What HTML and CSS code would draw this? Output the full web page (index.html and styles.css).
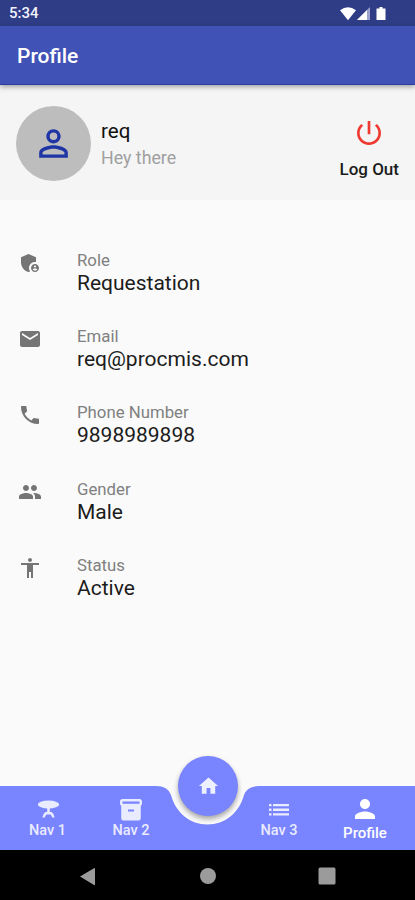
FILE: index.html
```html
<!DOCTYPE html>
<html lang="en">
<head>
  <meta charset="UTF-8">
  <meta name="viewport" content="width=device-width, initial-scale=1.0">
  <title>Profile</title>
  <link rel="stylesheet" href="styles.css">
</head>
<body>
  <div class="status-bar">
    <span class="time">5:34</span>
    <svg class="status-icons" width="50" height="16" viewBox="0 0 50 16">
      <path d="M0 4.2Q8 -1.8 16 4.2L8 14.2Z" fill="#fff"/>
      <path d="M17 14L30 1V14Z" fill="#9aa2d0"/>
      <path d="M17 14L27 4V14Z" fill="#fff"/>
      <path d="M39.500 1h3v1.500h3V14h-9V2.500h3Z" fill="#fff"/>
    </svg>
  </div>

  <header class="app-bar">
    <h1>Profile</h1>
  </header>

  <section class="user-card">
    <div class="avatar">
      <svg width="43" height="43" viewBox="0 0 24 24">
        <path d="M12 5.900a2.100 2.100 0 1 1 0 4.200 2.100 2.100 0 0 1 0-4.200m0 9c2.970 0 6.100 1.460 6.100 2.100v1.100H5.900V17c0-.64 3.130-2.100 6.100-2.100M12 4C9.790 4 8 5.790 8 8s1.790 4 4 4 4-1.790 4-4-1.790-4-4-4zm0 9c-2.670 0-8 1.340-8 4v3h16v-3c0-2.660-5.330-4-8-4z"/>
      </svg>
    </div>
    <div class="user-text">
      <div class="user-name">req</div>
      <div class="user-bio">Hey there</div>
    </div>
    <div class="logout">
      <svg width="32" height="32" viewBox="0 0 24 24">
        <path d="M13 3h-2v10h2V3zm4.830 2.170l-1.420 1.420A6.920 6.920 0 0 1 19 12c0 3.870-3.130 7-7 7s-7-3.130-7-7c0-2.190 1.010-4.140 2.580-5.420L6.170 5.170A8.930 8.930 0 0 0 3 12c0 4.970 4.030 9 9 9s9-4.030 9-9c0-2.740-1.230-5.180-3.170-6.830z"/>
      </svg>
      <span>Log Out</span>
    </div>
  </section>

  <main class="details">
    <div class="row">
      <svg viewBox="0 0 24 24">
        <path d="M17 11c.34 0 .67.040 1 .090V6.270L10.500 3 3 6.270v4.910c0 4.540 3.200 8.790 7.500 9.820.55-.13 1.080-.32 1.600-.55A5.970 5.970 0 0 1 11 17c0-3.310 2.690-6 6-6z"/>
        <path d="M17 13c-2.210 0-4 1.790-4 4s1.790 4 4 4 4-1.790 4-4-1.790-4-4-4zm0 1.380a1.120 1.120 0 1 1 0 2.240 1.120 1.120 0 0 1 0-2.240zm0 5.370c-.93 0-1.740-.46-2.240-1.170.050-.72 1.510-1.080 2.240-1.080s2.190.36 2.240 1.080c-.5.710-1.310 1.170-2.240 1.170z"/>
      </svg>
      <div>
        <div class="label">Role</div>
        <div class="value">Requestation</div>
      </div>
    </div>
    <div class="row">
      <svg viewBox="0 0 24 24">
        <path d="M20 4H4c-1.100 0-1.990.9-1.990 2L2 18c0 1.100.9 2 2 2h16c1.100 0 2-.9 2-2V6c0-1.100-.9-2-2-2zm0 4l-8 5-8-5V6l8 5 8-5v2z"/>
      </svg>
      <div>
        <div class="label">Email</div>
        <div class="value">req@procmis.com</div>
      </div>
    </div>
    <div class="row">
      <svg viewBox="0 0 24 24">
        <path d="M6.620 10.790c1.440 2.830 3.760 5.140 6.590 6.590l2.200-2.200c.27-.27.67-.36 1.020-.24 1.120.37 2.330.57 3.570.57.55 0 1 .45 1 1V20c0 .55-.45 1-1 1-9.390 0-17-7.610-17-17 0-.55.45-1 1-1h3.500c.55 0 1 .45 1 1 0 1.250.2 2.450.57 3.570.11.35.030.74-.25 1.020l-2.200 2.200z"/>
      </svg>
      <div>
        <div class="label">Phone Number</div>
        <div class="value">9898989898</div>
      </div>
    </div>
    <div class="row">
      <svg viewBox="0 0 24 24">
        <path d="M16 11c1.660 0 2.990-1.340 2.990-3S17.660 5 16 5s-3 1.340-3 3 1.340 3 3 3zm-8 0c1.660 0 2.990-1.340 2.990-3S9.660 5 8 5 5 6.340 5 8s1.340 3 3 3zm0 2c-2.330 0-7 1.170-7 3.500V19h14v-2.500c0-2.330-4.670-3.500-7-3.500zm8 0c-.29 0-.62.020-.97.050 1.160.84 1.970 1.970 1.970 3.450V19h6v-2.500c0-2.330-4.670-3.500-7-3.500z"/>
      </svg>
      <div>
        <div class="label">Gender</div>
        <div class="value">Male</div>
      </div>
    </div>
    <div class="row">
      <svg viewBox="0 0 24 24">
        <path d="M12 2c1.100 0 2 .9 2 2s-.9 2-2 2-2-.9-2-2 .9-2 2-2zm9 7h-6v13h-2v-6h-2v6H9V9H3V7h18v2z"/>
      </svg>
      <div>
        <div class="label">Status</div>
        <div class="value">Active</div>
      </div>
    </div>
  </main>

  <nav class="bottom-nav">
    <svg class="nav-shape" width="415" height="64" viewBox="0 0 415 64">
      <path d="M0 0H156Q168 0 171 9C176 27 190 38.500 207.500 38.500S239 27 244 9Q247 0 259 0H415V64H0Z"/>
    </svg>
    <a class="nav-item nav-1">
      <svg width="24" height="24" viewBox="0 0 24 24">
        <ellipse cx="12.500" cy="6.500" rx="10.700" ry="4"/>
        <path d="M11.200 10h2.600v4h1.900q2.500 2 3 5.500h-2.400L14.700 16.500h-4.400L8.700 19.500H6.300q.5-3.500 3-5.500h1.900z"/>
      </svg>
      <span>Nav 1</span>
    </a>
    <a class="nav-item nav-2">
      <svg width="24" height="24" viewBox="0 0 24 24">
        <path fill-rule="evenodd" d="M3.500 1h17Q23 1 23 3.500v2Q23 7.500 21.800 7.800V20Q21.800 22.500 19.500 22.500h-15Q2.200 22.500 2.200 20V7.800Q1 7.500 1 5.500v-2Q1 1 3.500 1zM3.500 3.600v2.200h17V3.600zM9 11.500v2h6v-2z"/>
      </svg>
      <span>Nav 2</span>
    </a>
    <a class="home">
      <svg width="24" height="24" viewBox="0 0 24 24">
        <path d="M10 20v-6h4v6h5v-8h3L12 3 2 12h3v8z"/>
      </svg>
    </a>
    <a class="nav-item nav-3">
      <svg width="24" height="24" viewBox="0 0 24 24">
        <path d="M2 6h2.500v2.300H2zM6 6h16v2.300H6zM2 10.600h2.500v2.300H2zM6 10.600h16v2.300H6zM2 15.200h2.500v2.300H2zM6 15.200h16v2.300H6z"/>
      </svg>
      <span>Nav 3</span>
    </a>
    <a class="nav-item nav-4 active">
      <svg width="30" height="30" viewBox="0 0 24 24">
        <path d="M12 12c2.210 0 4-1.790 4-4s-1.790-4-4-4-4 1.790-4 4 1.790 4 4 4zm0 2c-2.670 0-8 1.340-8 4v2h16v-2c0-2.660-5.330-4-8-4z"/>
      </svg>
      <span>Profile</span>
    </a>
  </nav>

  <footer class="system-nav">
    <svg width="18" height="20" viewBox="0 0 18 20"><path d="M1 10.500L15 2.200Q16 1.800 16 3v15.500Q16 19.500 15 19z"/></svg>
    <svg width="18" height="18" viewBox="0 0 18 18"><circle cx="9" cy="9" r="8"/></svg>
    <svg width="18" height="18" viewBox="0 0 18 18"><rect x=".5" y=".5" width="17" height="17" rx="1.500"/></svg>
  </footer>
</body>
</html>
```
FILE: styles.css
```css
* {
  box-sizing: border-box;
}

body {
  margin: 0;
  height: 900px;
  display: flex;
  flex-direction: column;
  overflow: hidden;
  font-family: Roboto, "Liberation Sans", sans-serif;
  background-color: #fafafa;
  color: #1c1c1c;
}

.status-bar {
  height: 26px;
  padding: 0 25px 0 9px;
  display: flex;
  align-items: center;
  justify-content: space-between;
  background-color: #2f3d87;
}

.time {
  color: #f2f3fb;
  font-size: 15px;
  font-weight: 500;
  line-height: 28px;
}

.status-icons {
  margin: 2px 0 0;
}

.app-bar {
  position: relative;
  height: 59px;
  padding: 0 17px;
  display: flex;
  align-items: center;
  background-color: #4052b6;
  border-bottom: 1px solid #2a3ea8;
  box-shadow: 0 2px 5px rgba(0, 0, 0, 0.35);
}

.app-bar h1 {
  margin: 2px 0 0;
  color: #fff;
  font-size: 21px;
  font-weight: 500;
}

.user-card {
  height: 115px;
  padding: 2px 16px 0;
  display: flex;
  align-items: center;
  background-color: #f5f5f5;
}

.avatar {
  width: 75px;
  height: 75px;
  border-radius: 50%;
  display: flex;
  align-items: center;
  justify-content: center;
  background-color: #bdbdbd;
}

.avatar svg {
  fill: #1f35a5;
}

.user-text {
  flex: 1;
  margin-left: 10px;
}

.user-name {
  font-size: 20.500px;
  line-height: 28px;
  color: #111;
}

.user-bio {
  font-size: 17.800px;
  line-height: 26px;
  color: #a0a0a0;
}

.logout {
  margin-top: 10px;
  display: flex;
  flex-direction: column;
  align-items: center;
  gap: 9px;
  font-size: 17px;
  font-weight: 500;
  line-height: 22px;
}

.logout svg {
  fill: #ee3a30;
}

.details {
  flex: 1;
  padding: 49px 18px 0;
}

.row {
  height: 76.200px;
  display: flex;
}

.row svg {
  width: 24px;
  height: 24px;
  margin: 2px 35px 0 0;
  fill: #757575;
}

.label {
  font-size: 16.800px;
  line-height: 23px;
  color: #808080;
}

.value {
  font-size: 21px;
  line-height: 22px;
  color: #1c1c1c;
}

.bottom-nav {
  position: relative;
  height: 64px;
  display: grid;
  grid-template-columns: 89px 84px 70px 72px 100px;
}

.nav-shape {
  position: absolute;
  left: 0;
  top: 0;
  fill: #7984ff;
}

.nav-item {
  position: relative;
  padding-top: 12px;
  display: flex;
  flex-direction: column;
  align-items: center;
  font-size: 14.500px;
  font-weight: 500;
  line-height: 18px;
  color: #e9ebff;
}

.nav-item svg {
  fill: #e9ebff;
}

.nav-1 {
  padding-left: 6px;
}

.nav-3 {
  grid-column: 4;
}

.nav-item.active {
  padding-top: 8px;
  font-size: 15px;
  line-height: 19px;
  color: #fff;
}

.nav-item.active svg {
  fill: #fff;
}

/* round home button sitting in the notch */
.home {
  position: absolute;
  left: 178px;
  top: -30px;
  width: 60px;
  height: 60px;
  border-radius: 50%;
  display: flex;
  align-items: center;
  justify-content: center;
  background-color: #7984ff;
  box-shadow: 0 3px 5px rgba(0, 0, 0, 0.35);
}

.home svg {
  width: 23px;
  fill: #eef0ff;
}

.system-nav {
  height: 50px;
  display: flex;
  align-items: center;
  justify-content: space-between;
  padding: 1px 79px 0;
  background-color: #000;
}

.system-nav svg {
  fill: #9b9b9b;
}
```
